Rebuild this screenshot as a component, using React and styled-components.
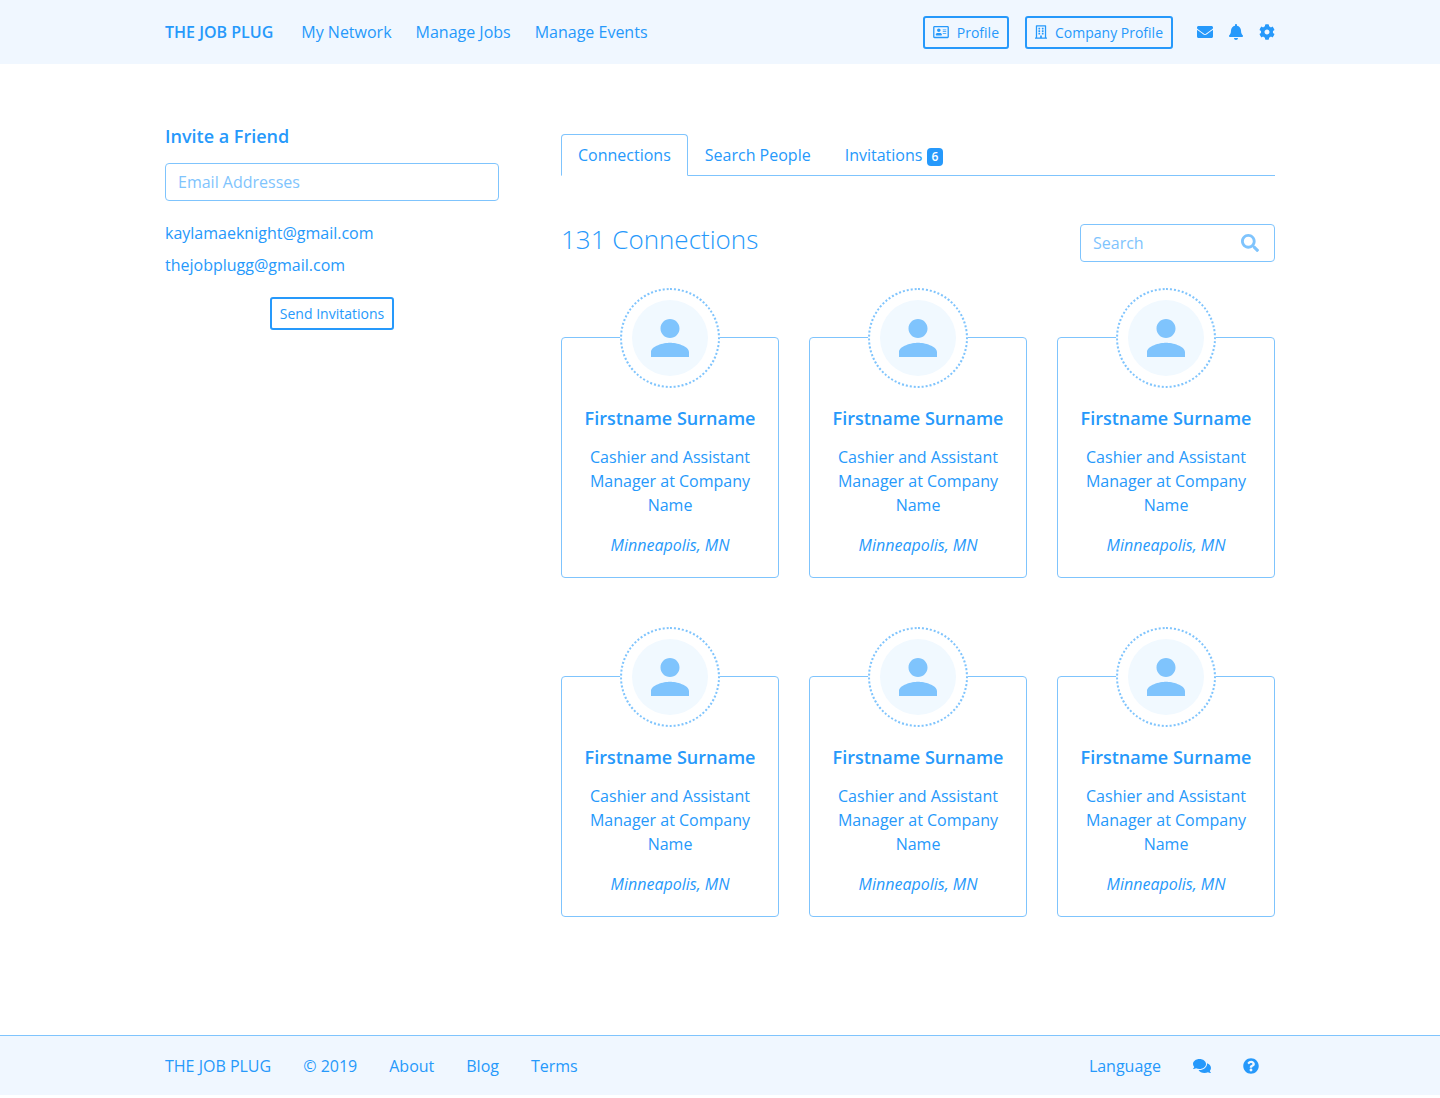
import React from "react";
import styled, { createGlobalStyle } from "styled-components";
import {
  FaRegAddressCard,
  FaRegBuilding,
  FaEnvelope,
  FaBell,
  FaCog,
  FaSearch,
  FaComments,
  FaQuestionCircle,
} from "react-icons/fa";

const blue = "#2699fb";
const sky = "#7fc4fd";
const pale = "#f0f7ff";

const GlobalStyle = createGlobalStyle`
  *, *::before, *::after { box-sizing: border-box; }
  body {
    margin: 0;
    background: #fff;
    color: ${blue};
    font-family: "Open Sans", "Noto Sans", sans-serif;
    font-size: 16px;
    line-height: 24px;
  }
  h1, h2, h3, p, ul { margin: 0; padding: 0; }
  ul { list-style: none; }
  a { color: inherit; text-decoration: none; }
  button, input { font: inherit; color: inherit; }
  svg { display: block; }
`;

const Container = styled.div`
  width: 100%;
  max-width: 1140px;
  margin: 0 auto;
  padding: 0 15px;
`;

const Header = styled.header`
  background: ${pale};
`;

const HeaderBar = styled(Container)`
  display: flex;
  align-items: center;
  justify-content: space-between;
  min-height: 64px;
`;

const Group = styled.div`
  display: flex;
  align-items: center;
  gap: ${({ $gap }) => $gap}px;
`;

const Brand = styled.a`
  font-weight: 600;
`;

const Nav = styled.nav`
  display: flex;
  gap: 24px;
`;

const OutlineButton = styled.button`
  display: inline-flex;
  align-items: center;
  gap: 8px;
  padding: 4px 8px;
  border: 2px solid ${blue};
  border-radius: 3px;
  background: transparent;
  font-size: 14px;
  line-height: 21px;
  cursor: pointer;

  svg {
    width: ${({ $iconWidth }) => $iconWidth || 14}px;
    height: 14px;
  }
`;

const IconLink = styled.a`
  svg {
    width: ${({ $width }) => $width || 16}px;
    height: 16px;
  }
`;

const Main = styled(Container)`
  display: grid;
  grid-template-columns: minmax(0, 334fr) minmax(0, 714fr);
  column-gap: 62px;
  align-items: start;
  padding-top: 62px;
  padding-bottom: 118px;
`;

const Invite = styled.form`
  display: flex;
  flex-direction: column;
`;

const Subtitle = styled.h2`
  font-size: 18px;
  font-weight: 600;
  line-height: 20px;
`;

const Field = styled.input`
  width: 100%;
  height: 38px;
  margin-top: 17px;
  padding: 6px 12px;
  border: 1px solid ${sky};
  border-radius: 4px;
  background: #fff;
  outline: none;

  &::placeholder { color: ${sky}; opacity: 1; }
`;

const EmailList = styled.ul`
  display: grid;
  gap: 8px;
  margin: 20px 0;
`;

const SendButton = styled(OutlineButton)`
  align-self: center;
`;

const Content = styled.section`
  padding-top: 8px;
`;

const Tabs = styled.div`
  display: flex;
  border-bottom: 1px solid ${sky};
`;

const Tab = styled.button`
  margin-bottom: -1px;
  padding: 8px 16px;
  border: 1px solid transparent;
  border-radius: 4px 4px 0 0;
  background: transparent;
  cursor: pointer;

  &[aria-selected="true"] {
    border-color: ${sky} ${sky} #fff;
    background: #fff;
  }
`;

const Badge = styled.span`
  display: inline-block;
  padding: 3px 5px;
  border-radius: 4px;
  background: ${blue};
  color: #fff;
  font-size: 12px;
  font-weight: 600;
  line-height: 12px;
  vertical-align: baseline;
`;

const Toolbar = styled.div`
  display: flex;
  align-items: flex-start;
  justify-content: space-between;
  margin-top: 48px;
`;

const Title = styled.h1`
  font-size: 26px;
  font-weight: 300;
  line-height: 30px;
`;

const SearchBox = styled.label`
  display: flex;
  align-items: center;
  gap: 8px;
  width: 195px;
  height: 38px;
  padding: 0 15px 0 12px;
  border: 1px solid ${sky};
  border-radius: 4px;
  color: ${sky};

  svg { flex: none; width: 18px; height: 18px; }
`;

const SearchInput = styled.input`
  flex: 1;
  min-width: 0;
  padding: 0;
  border: 0;
  outline: none;
  background: transparent;
  color: ${blue};

  &::placeholder { color: ${sky}; opacity: 1; }
`;

const Cards = styled.ul`
  display: grid;
  grid-template-columns: repeat(3, minmax(0, 1fr));
  gap: 98px 30px;
  margin-top: 75px;
`;

const Card = styled.li`
  display: flex;
  flex-direction: column;
  align-items: center;
  padding: 0 20px 20px;
  border: 1px solid ${sky};
  border-radius: 4px;
  text-align: center;
`;

const Avatar = styled.div`
  width: 100px;
  height: 100px;
  margin-top: -50px;
  padding: 10px;
  border: 2px dotted ${sky};
  border-radius: 50%;
  background: #fff;
`;

const AvatarDisc = styled.div`
  display: flex;
  align-items: center;
  justify-content: center;
  height: 100%;
  border-radius: 50%;
  background: #f1f9ff;
  color: ${sky};

  svg { width: 38px; height: 38px; }
`;

const Name = styled.h3`
  margin: 20px 0 17px;
  font-size: 18px;
  font-weight: 600;
  line-height: 20px;
  white-space: nowrap;
`;

const Place = styled.p`
  margin-top: 16px;
  font-style: italic;
`;

const Footer = styled.footer`
  border-top: 1px solid ${sky};
  background: ${pale};
`;

const FooterBar = styled(HeaderBar)`
  min-height: 59px;
`;

const FooterTools = styled(Group)`
  padding-right: 16px;
`;

const people = Array.from({ length: 6 }, (_, id) => ({
  id,
  name: "Firstname Surname",
  role: "Cashier and Assistant Manager at Company Name",
  place: "Minneapolis, MN",
}));

function PersonIcon() {
  return (
    <svg viewBox="4 4 16 16" fill="currentColor" aria-hidden="true">
      <path d="M12 12c2.21 0 4-1.79 4-4s-1.79-4-4-4-4 1.79-4 4 1.79 4 4 4zm0 2c-2.67 0-8 1.34-8 4v2h16v-2c0-2.66-5.33-4-8-4z" />
    </svg>
  );
}

export default function App() {
  return (
    <>
      <GlobalStyle />
      <Header>
        <HeaderBar>
          <Group $gap={28}>
            <Brand href="#">THE JOB PLUG</Brand>
            <Nav>
              <a href="#network">My Network</a>
              <a href="#jobs">Manage Jobs</a>
              <a href="#events">Manage Events</a>
            </Nav>
          </Group>
          <Group $gap={24}>
            <Group $gap={16}>
              <OutlineButton type="button" $iconWidth={16}>
                <FaRegAddressCard />
                Profile
              </OutlineButton>
              <OutlineButton type="button" $iconWidth={12}>
                <FaRegBuilding />
                Company Profile
              </OutlineButton>
            </Group>
            <Group $gap={16}>
              <IconLink href="#messages" aria-label="Messages"><FaEnvelope /></IconLink>
              <IconLink href="#alerts" aria-label="Notifications" $width={14}><FaBell /></IconLink>
              <IconLink href="#settings" aria-label="Settings"><FaCog /></IconLink>
            </Group>
          </Group>
        </HeaderBar>
      </Header>

      <Main as="main">
        <Invite onSubmit={(e) => e.preventDefault()}>
          <Subtitle>Invite a Friend</Subtitle>
          <Field type="text" placeholder="Email Addresses" aria-label="Email Addresses" />
          <EmailList>
            <li>kaylamaeknight@gmail.com</li>
            <li>thejobplugg@gmail.com</li>
          </EmailList>
          <SendButton type="submit">Send Invitations</SendButton>
        </Invite>

        <Content>
          <Tabs role="tablist">
            <Tab type="button" role="tab" aria-selected="true">Connections</Tab>
            <Tab type="button" role="tab" aria-selected="false">Search People</Tab>
            <Tab type="button" role="tab" aria-selected="false">
              Invitations <Badge>6</Badge>
            </Tab>
          </Tabs>
          <Toolbar>
            <Title>131 Connections</Title>
            <SearchBox>
              <SearchInput type="text" placeholder="Search" aria-label="Search" />
              <FaSearch />
            </SearchBox>
          </Toolbar>
          <Cards>
            {people.map((person) => (
              <Card key={person.id}>
                <Avatar>
                  <AvatarDisc><PersonIcon /></AvatarDisc>
                </Avatar>
                <Name>{person.name}</Name>
                <p>{person.role}</p>
                <Place>{person.place}</Place>
              </Card>
            ))}
          </Cards>
        </Content>
      </Main>

      <Footer>
        <FooterBar>
          <Group $gap={32}>
            <a href="#home">THE JOB PLUG</a>
            <span>© 2019</span>
            <a href="#about">About</a>
            <a href="#blog">Blog</a>
            <a href="#terms">Terms</a>
          </Group>
          <FooterTools $gap={32}>
            <a href="#language">Language</a>
            <IconLink href="#chat" aria-label="Chat" $width={18}><FaComments /></IconLink>
            <IconLink href="#help" aria-label="Help"><FaQuestionCircle /></IconLink>
          </FooterTools>
        </FooterBar>
      </Footer>
    </>
  );
}
